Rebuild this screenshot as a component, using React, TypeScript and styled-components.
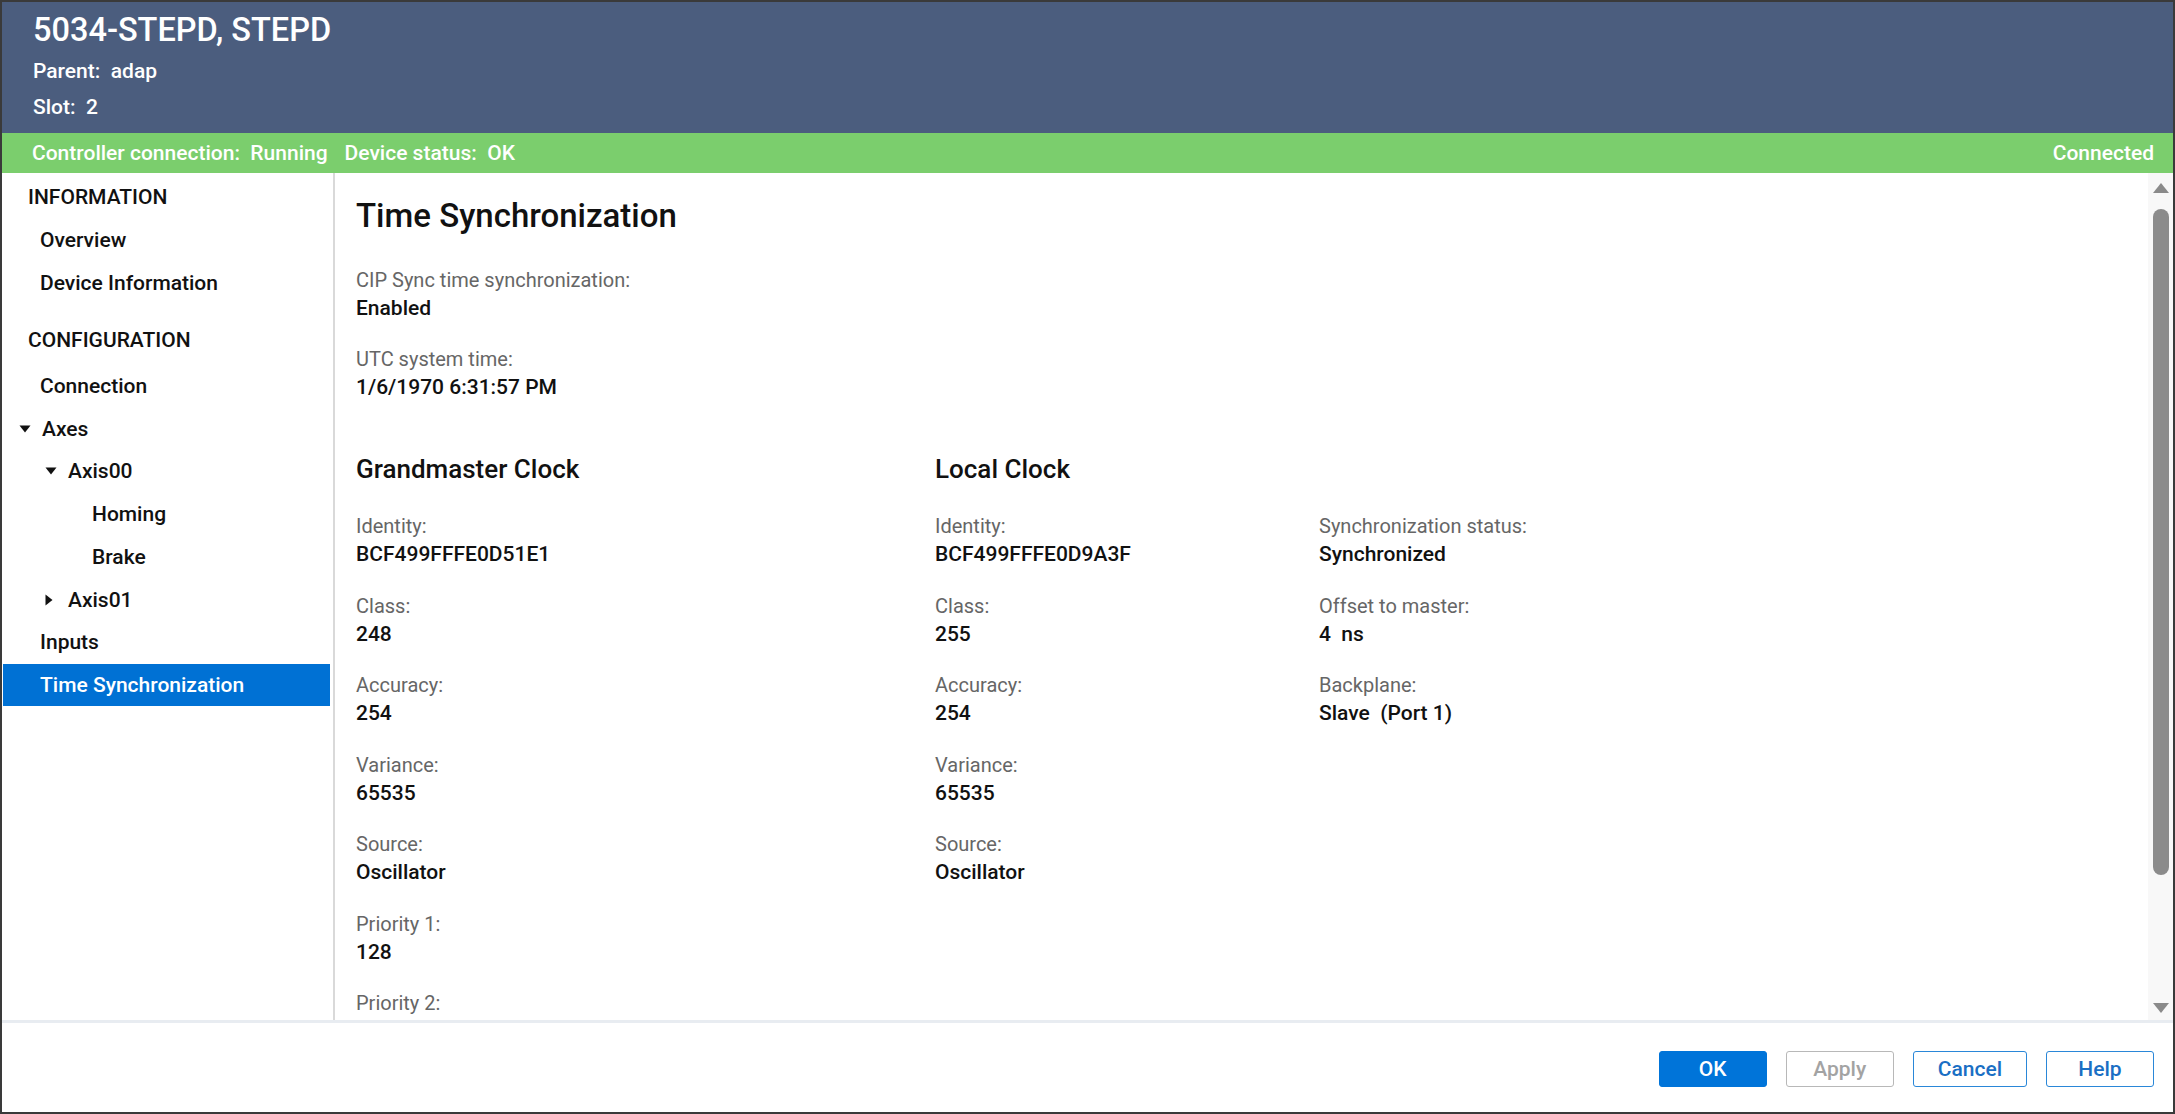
import styled, { createGlobalStyle } from 'styled-components'

type NavItem = {
  label: string
  level: number
  caret?: 'down' | 'right'
  selected?: boolean
}

type Field = {
  label: string
  value?: string
}

const infoItems: NavItem[] = [
  { label: 'Overview', level: 0 },
  { label: 'Device Information', level: 0 },
]

const configItems: NavItem[] = [
  { label: 'Connection', level: 0 },
  { label: 'Axes', level: 0, caret: 'down' },
  { label: 'Axis00', level: 1, caret: 'down' },
  { label: 'Homing', level: 2 },
  { label: 'Brake', level: 2 },
  { label: 'Axis01', level: 1, caret: 'right' },
  { label: 'Inputs', level: 0 },
  { label: 'Time Synchronization', level: 0, selected: true },
]

const grandmaster: Field[] = [
  { label: 'Identity:', value: 'BCF499FFFE0D51E1' },
  { label: 'Class:', value: '248' },
  { label: 'Accuracy:', value: '254' },
  { label: 'Variance:', value: '65535' },
  { label: 'Source:', value: 'Oscillator' },
  { label: 'Priority 1:', value: '128' },
  { label: 'Priority 2:' },
]

const localClock: Field[] = [
  { label: 'Identity:', value: 'BCF499FFFE0D9A3F' },
  { label: 'Class:', value: '255' },
  { label: 'Accuracy:', value: '254' },
  { label: 'Variance:', value: '65535' },
  { label: 'Source:', value: 'Oscillator' },
]

const syncInfo: Field[] = [
  { label: 'Synchronization status:', value: 'Synchronized' },
  { label: 'Offset to master:', value: '4\u00a0\u00a0ns' },
  { label: 'Backplane:', value: 'Slave\u00a0\u00a0(Port 1)' },
]

const textX = [38, 64, 90]

const Caret = ({ dir }: { dir: 'down' | 'right' }) =>
  dir === 'down' ? (
    <svg width='12' height='8' viewBox='0 0 12 8'>
      <path d='M0.5 0.5 L11.5 0.5 L6 7.5 Z' fill='#111' />
    </svg>
  ) : (
    <svg width='8' height='12' viewBox='0 0 8 12'>
      <path d='M0.5 0.5 L7.5 6 L0.5 11.5 Z' fill='#111' />
    </svg>
  )

const NavRow = ({ item }: { item: NavItem }) => {
  const x = textX[item.level]
  return (
    <Row
      $selected={item.selected}
      style={{ paddingLeft: item.caret ? x - 22 : x - 1 }}
    >
      {item.caret && (
        <CaretBox>
          <Caret dir={item.caret} />
        </CaretBox>
      )}
      {item.label}
    </Row>
  )
}

const FieldColumn = ({ title, fields }: { title?: string; fields: Field[] }) => (
  <Column>
    <SectionTitle>{title ?? '\u00a0'}</SectionTitle>
    {fields.map((f) => (
      <FieldBlock key={f.label}>
        <Label>{f.label}</Label>
        {f.value && <Value>{f.value}</Value>}
      </FieldBlock>
    ))}
  </Column>
)

const App = () => {
  return (
    <>
      <GlobalStyle />
      <Window>
        <Header>
          <Title>5034-STEPD, STEPD</Title>
          <HeaderLine>Parent:&nbsp; adap</HeaderLine>
          <HeaderLine>Slot:&nbsp; 2</HeaderLine>
        </Header>
        <StatusBar>
          <StatusGroup>
            <span>Controller connection:&nbsp; Running</span>
            <span>Device status:&nbsp; OK</span>
          </StatusGroup>
          <span>Connected</span>
        </StatusBar>
        <Body>
          <Sidebar>
            <Heading>INFORMATION</Heading>
            {infoItems.map((item) => (
              <NavRow key={item.label} item={item} />
            ))}
            <Heading $spaced>CONFIGURATION</Heading>
            <Spacer />
            {configItems.map((item) => (
              <NavRow key={item.label} item={item} />
            ))}
          </Sidebar>
          <Content>
            <PageTitle>Time Synchronization</PageTitle>
            <FieldBlock>
              <Label>CIP Sync time synchronization:</Label>
              <Value>Enabled</Value>
            </FieldBlock>
            <FieldBlock>
              <Label>UTC system time:</Label>
              <Value>1/6/1970 6:31:57 PM</Value>
            </FieldBlock>
            <Clocks>
              <FieldColumn title='Grandmaster Clock' fields={grandmaster} />
              <FieldColumn title='Local Clock' fields={localClock} />
              <FieldColumn fields={syncInfo} />
            </Clocks>
          </Content>
          <ScrollBar>
            <ArrowUp />
            <Thumb />
            <Grow />
            <ArrowDown />
          </ScrollBar>
        </Body>
        <Footer>
          <Button $variant='primary'>OK</Button>
          <Button $variant='disabled'>Apply</Button>
          <Button>Cancel</Button>
          <Button>Help</Button>
        </Footer>
      </Window>
    </>
  )
}

export default App

const GlobalStyle = createGlobalStyle`
  html, body {
    margin: 0;
    padding: 0;
    height: 100%;
  }
  body {
    font-family: Roboto, 'Liberation Sans', Arial, sans-serif;
    background: #ffffff;
    color: #111;
  }
  #root {
    height: 100%;
  }
  * {
    box-sizing: border-box;
  }
`

const Window = styled.div`
  height: 100vh;
  display: flex;
  flex-direction: column;
  border: 2px solid #3a3a3a;
  overflow: hidden;
`

const Header = styled.header`
  height: 131px;
  flex: 0 0 auto;
  background: #4b5d7e;
  color: #ffffff;
  padding: 11px 31px 0;
`

const Title = styled.div`
  font-size: 32.5px;
  line-height: 34px;
  font-weight: 500;
  margin-bottom: 12px;
`

const HeaderLine = styled.div`
  font-size: 21px;
  line-height: 24px;
  font-weight: 500;
  margin-bottom: 12px;
`

const StatusBar = styled.div`
  height: 40px;
  flex: 0 0 auto;
  background: #7bce6d;
  color: #ffffff;
  font-size: 21px;
  font-weight: 500;
  padding: 0 19px 0 30px;
  display: flex;
  align-items: center;
  justify-content: space-between;
`

const StatusGroup = styled.div`
  display: flex;
  gap: 17px;
`

const Body = styled.div`
  flex: 1;
  min-height: 0;
  display: flex;
`

const Sidebar = styled.nav`
  width: 333px;
  flex: 0 0 auto;
  border-right: 2px solid #d9d9d9;
  padding-top: 3px;
  font-size: 21px;
  font-weight: 500;
`

const Heading = styled.div<{ $spaced?: boolean }>`
  height: 42.7px;
  display: flex;
  align-items: center;
  padding-left: 26px;
  margin-top: ${(p) => (p.$spaced ? '15px' : '0')};
  text-transform: uppercase;
`

const Spacer = styled.div`
  height: 3px;
`

const Row = styled.div<{ $selected?: boolean }>`
  height: 42.7px;
  display: flex;
  align-items: center;
  margin: 0 3px 0 1px;
  background: ${(p) => (p.$selected ? '#0071d4' : 'transparent')};
  color: ${(p) => (p.$selected ? '#ffffff' : '#111111')};
`

const CaretBox = styled.span`
  width: 23px;
  display: flex;
  align-items: center;
`

const Content = styled.main`
  flex: 1;
  min-width: 0;
  overflow: hidden;
  padding: 25px 0 0 21px;
`

const PageTitle = styled.h1`
  margin: 0 0 32px;
  font-size: 33px;
  line-height: 36px;
  font-weight: 500;
`

const FieldBlock = styled.div`
  margin-bottom: 23px;
`

const Label = styled.div`
  font-size: 20px;
  line-height: 28px;
  color: #666666;
`

const Value = styled.div`
  font-size: 21px;
  line-height: 28px;
  font-weight: 500;
  color: #111111;
`

const Clocks = styled.div`
  display: grid;
  grid-template-columns: 579px 384px 1fr;
  margin-top: 52px;
  ${FieldBlock} {
    margin-bottom: 23.5px;
  }
`

const Column = styled.div`
  display: flex;
  flex-direction: column;
`

const SectionTitle = styled.h2`
  margin: 0 0 27px;
  font-size: 26px;
  line-height: 32px;
  font-weight: 500;
`

const ScrollBar = styled.div`
  width: 25px;
  flex: 0 0 auto;
  background: #f8f8f8;
  display: flex;
  flex-direction: column;
  align-items: center;
`

const ArrowUp = styled.div`
  margin-top: 10px;
  width: 0;
  height: 0;
  border-left: 8px solid transparent;
  border-right: 8px solid transparent;
  border-bottom: 10px solid #8a8a8a;
`

const ArrowDown = styled.div`
  margin-bottom: 7px;
  width: 0;
  height: 0;
  border-left: 8px solid transparent;
  border-right: 8px solid transparent;
  border-top: 10px solid #8a8a8a;
`

const Thumb = styled.div`
  margin-top: 16px;
  width: 16px;
  height: 666px;
  border-radius: 8px;
  background: #8b8b8b;
`

const Grow = styled.div`
  flex: 1;
`

const Footer = styled.footer`
  height: 92px;
  flex: 0 0 auto;
  border-top: 3px solid #e8ecf1;
  display: flex;
  justify-content: flex-end;
  align-items: flex-start;
  gap: 19px;
  padding: 28px 19px 0 0;
`

const Button = styled.button<{ $variant?: 'primary' | 'disabled' }>`
  height: 36px;
  min-width: 108px;
  padding: 0 24px;
  border-radius: 3px;
  font-family: inherit;
  font-size: 21px;
  font-weight: 500;
  cursor: pointer;
  background: ${(p) => (p.$variant === 'primary' ? '#0074d9' : '#ffffff')};
  color: ${(p) =>
    p.$variant === 'primary'
      ? '#ffffff'
      : p.$variant === 'disabled'
        ? '#a3a3a3'
        : '#1a6fc4'};
  border: 1.5px solid
    ${(p) =>
      p.$variant === 'primary'
        ? '#0074d9'
        : p.$variant === 'disabled'
          ? '#b8b8b8'
          : '#2a87d8'};
`
